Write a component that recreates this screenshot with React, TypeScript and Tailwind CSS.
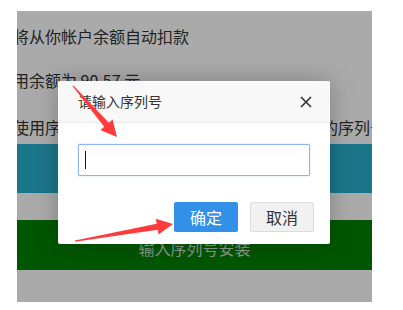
import React from "react";

export default function App() {
  return (
    <div
      className="relative w-[403px] h-[310px] bg-white overflow-hidden"
      style={{ fontFamily: '"Noto Sans CJK SC", "Noto Sans", sans-serif' }}
    >
      <div className="pt-[11px] pl-[17px]">
        <div className="w-[355px] h-[291px] bg-[#aaaaaa] overflow-hidden pt-[13px]">
          <div className="ml-[-4px] whitespace-nowrap text-[16px] leading-[24px] h-[24px] text-[#222]">
            将从你帐户余额自动扣款
          </div>
          <div className="ml-[-4px] mt-[20px] whitespace-nowrap text-[16px] leading-[24px] h-[24px] text-[#222]">
            用余额为 90.57 元
          </div>
          <div className="ml-[-4px] mt-[23px] whitespace-nowrap text-[16px] leading-[24px] h-[24px] text-[#222] flex">
            <span className="w-[309px] shrink-0 overflow-hidden">使用序列号安装，请在下方输入您购买时获得</span>
            <span className="shrink-0">的序列号</span>
          </div>
          <div className="mt-[5px] h-[49px] bg-[#1b7689]" />
          <div className="h-[27px]" />
          <div className="h-[50px] bg-[#015701] flex items-center justify-center pt-[6px] text-[16px] text-[#8a9a8a]">
            输入序列号安装
          </div>
        </div>
      </div>

      {/* dialog */}
      <div className="absolute left-[58px] top-[81px] w-[272px] h-[163px] bg-white rounded-[2px] shadow-[0_0_24px_rgba(0,0,0,0.25)] flex flex-col overflow-hidden">
        <div className="h-[42px] bg-[#f8f8f8] border-b border-[#ececec] flex items-center justify-between pl-[20px] pr-[18px]">
          <span className="text-[14px] text-[#333]">请输入序列号</span>
          <svg width="12" height="12" viewBox="0 0 12 12">
            <path d="M1 1 L11 11 M11 1 L1 11" stroke="#333" strokeWidth="1.6" fill="none" />
          </svg>
        </div>
        <div className="px-[20px] pt-[21px]">
          <div className="h-[32px] border border-[#8fb4ef] rounded-[1px] shadow-[0_0_2px_rgba(80,140,240,0.35)] flex items-center pl-[6px]">
            <div className="w-px h-[18px] bg-[#111]" />
          </div>
        </div>
        <div className="flex justify-end gap-[12px] pr-[16px] mt-[26px]">
          <div className="w-[64px] h-[30px] rounded-[2px] bg-[#3390e8] text-white text-[16px] flex items-center justify-center">
            确定
          </div>
          <div className="w-[64px] h-[30px] rounded-[2px] bg-[#f1f1f1] border border-[#dcdcdc] text-[#333] text-[16px] flex items-center justify-center">
            取消
          </div>
        </div>
      </div>

      {/* arrows */}
      <svg className="absolute left-0 top-0" width="403" height="310" viewBox="0 0 403 310">
        <polygon
          points="72.5,86 73.5,85.5 108.8,122.8 112.6,119.6 117,137 100.4,130 104.2,126.8"
          fill="#ff3b3b"
        />
        <polygon
          points="75,240.5 156.7,223.7 155.8,218.8 173,224 158.6,234.6 157.7,229.7 75,241.8"
          fill="#ff3b3b"
        />
      </svg>
    </div>
  );
}
